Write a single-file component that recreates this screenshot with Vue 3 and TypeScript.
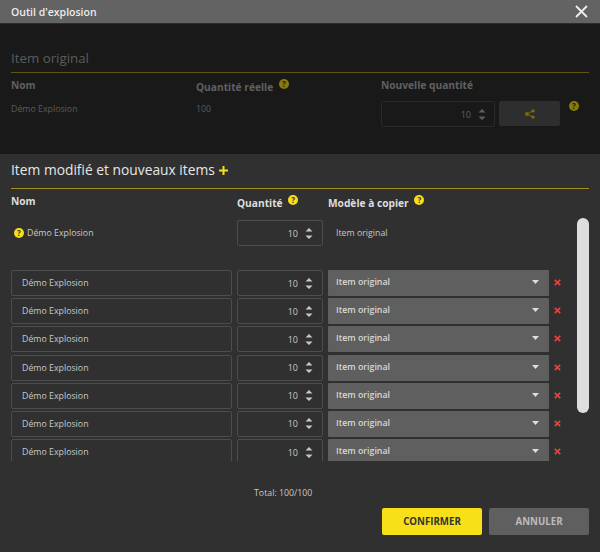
<template>
  <div class="dialog">
    <header class="titlebar">
      <span>Outil d'explosion</span>
      <svg class="close" width="13" height="13" viewBox="0 0 13 13">
        <path d="M1 1l11 11M12 1L1 12" stroke="#eee" stroke-width="1.8" fill="none" />
      </svg>
    </header>

    <section class="original">
      <h2>Item original</h2>
      <div class="orig-grid">
        <div class="col-label">Nom</div>
        <div class="col-label low">Quantité réelle <HelpDot dim class="up" /></div>
        <div class="col-label">Nouvelle quantité</div>
        <div class="value">Démo Explosion</div>
        <div class="value">100</div>
        <div class="new-qty">
          <div class="spin dim">
            <span>10</span>
            <svg class="arrows" width="8" height="13" viewBox="0 0 8 13">
              <path d="M4 1l3.5 3.5h-7zM4 12L.5 8.5h7z" fill="#5f5f5f" />
            </svg>
          </div>
          <button class="share" type="button">
            <svg width="10" height="10" viewBox="0 0 10 10" fill="#7d6a08">
              <circle cx="2" cy="5" r="1.9" />
              <circle cx="8" cy="1.9" r="1.7" />
              <circle cx="8" cy="8.1" r="1.7" />
              <path d="M2 5l6-3.1M2 5l6 3.1" stroke="#7d6a08" stroke-width="1" />
            </svg>
          </button>
          <HelpDot dim class="share-help" />
        </div>
      </div>
    </section>

    <section class="modified">
      <h2>
        Item modifié et nouveaux items
        <svg class="plus" width="9" height="9" viewBox="0 0 9 9">
          <path d="M4.5 0v9M0 4.5h9" stroke="#f7e017" stroke-width="2" />
        </svg>
      </h2>
      <div class="mod-head">
        <div class="col-label">Nom</div>
        <div class="col-label low">Quantité <HelpDot class="up" /></div>
        <div class="col-label low">Modèle à copier <HelpDot class="up" /></div>
      </div>

      <div class="list-wrap">
        <div class="list">
          <div class="row first">
            <div class="plain"><HelpDot class="lead" />Démo Explosion</div>
            <div class="spin">
              <span>10</span>
              <svg class="arrows" width="8" height="13" viewBox="0 0 8 13">
                <path d="M4 1l3.5 3.5h-7zM4 12L.5 8.5h7z" fill="#c8c8c8" />
              </svg>
            </div>
            <div class="plain model">Item original</div>
          </div>

          <div v-for="row in rows" :key="row" class="row">
            <div class="name">Démo Explosion</div>
            <div class="spin">
              <span>10</span>
              <svg class="arrows" width="8" height="13" viewBox="0 0 8 13">
                <path d="M4 1l3.5 3.5h-7zM4 12L.5 8.5h7z" fill="#c8c8c8" />
              </svg>
            </div>
            <div class="select">
              <span>Item original</span>
              <svg width="7" height="4" viewBox="0 0 7 4"><path d="M0 0h7L3.5 4z" fill="#ddd" /></svg>
            </div>
            <svg class="remove" width="7" height="7" viewBox="0 0 7 7">
              <path d="M.8.8l5.4 5.4M6.2.8L.8 6.2" stroke="#e8403c" stroke-width="1.7" />
            </svg>
          </div>
        </div>
        <div class="scrollbar"></div>
      </div>

      <div class="total">Total: 100/100</div>

      <div class="actions">
        <button class="btn confirm" type="button">CONFIRMER</button>
        <button class="btn cancel" type="button">ANNULER</button>
      </div>
    </section>
  </div>
</template>

<script setup lang="ts">
import { defineComponent, h } from 'vue'

const rows = [1, 2, 3, 4, 5, 6, 7]

// small round "?" marker used next to several labels
const HelpDot = defineComponent({
  props: { dim: Boolean },
  setup(props) {
    return () =>
      h('span', { class: 'help', style: { background: props.dim ? '#8a7a08' : '#f7e017', color: props.dim ? '#191919' : '#303030' } }, '?')
  },
})
</script>

<style>
html,
body {
  margin: 0;
  background: #303030;
}
</style>

<style scoped>
.dialog {
  width: 600px;
  height: 552px;
  overflow: hidden;
  display: flex;
  flex-direction: column;
  font-family: "Open Sans", "Noto Sans", sans-serif;
  font-size: 8.8px;
  color: #c8c8c8;
  background: #303030;
}

.titlebar {
  height: 23px;
  flex: none;
  display: flex;
  align-items: center;
  justify-content: space-between;
  padding: 0 12px 0 11px;
  background: #636363;
  border-bottom: 1px solid #2c2c2c;
  color: #ececec;
  font-size: 10.5px;
  font-weight: 600;
}

.original {
  height: 130px;
  flex: none;
  box-sizing: border-box;
  padding: 24px 11px 0;
  background: #191919;
  color: #5c5c5c;
}

h2 {
  margin: 0;
  font-size: 13.3px;
  font-weight: 400;
  line-height: 20px;
}

.original h2 {
  height: 24px;
  border-bottom: 1px solid #63520e;
  color: #5c5c5c;
}

.orig-grid {
  display: grid;
  grid-template-columns: 185px 185px 1fr;
  grid-template-rows: 20px 28px;
  padding-top: 3px;
}

.col-label {
  font-size: 10.2px;
  font-weight: 700;
  line-height: 18px;
  white-space: nowrap;
}

.low {
  position: relative;
  top: 2px;
}

.original .col-label {
  color: #606060;
}

.value {
  line-height: 26px;
  color: #5c5c5c;
}

.new-qty {
  display: flex;
  align-items: flex-start;
  gap: 4px;
  margin-top: 5px;
}

.spin {
  width: 86px;
  height: 26px;
  box-sizing: border-box;
  display: flex;
  align-items: center;
  justify-content: flex-end;
  gap: 7px;
  padding-right: 9px;
  flex: none;
  border: 1px solid #4d4d4d;
  border-radius: 2px;
  font-size: 9px;
  color: #c8c8c8;
}

.spin.dim {
  width: 114px;
  border-color: #2a2a2a;
  color: #5f5f5f;
  padding-right: 8px;
}

.share {
  width: 61px;
  height: 25px;
  padding: 0;
  display: flex;
  align-items: center;
  justify-content: center;
  background: #2e2e2e;
  border: none;
  border-radius: 2px;
}

.share-help {
  margin-left: 5px;
}

.help {
  display: inline-block;
  flex: none;
  width: 10px;
  height: 10px;
  border-radius: 50%;
  font-size: 8px;
  font-weight: 700;
  line-height: 10px;
  text-align: center;
  vertical-align: middle;
}

.up {
  margin-left: 3px;
  position: relative;
  top: -4px;
}

.modified {
  flex: 1;
  padding: 6px 11px 0;
  display: flex;
  flex-direction: column;
}

.modified h2 {
  height: 29px;
  box-sizing: border-box;
  border-bottom: 1px solid #a48f1c;
  color: #e6e6e6;
  font-size: 13.8px;
}

.plus {
  margin-left: 1px;
}

.mod-head {
  display: grid;
  grid-template-columns: 226px 91px 1fr;
  padding-top: 3px;
  height: 22px;
  color: #dedede;
}

.list-wrap {
  display: flex;
  justify-content: space-between;
  height: 247px;
  flex: none;
  overflow: hidden;
}

.list {
  width: 556px;
}

.row {
  display: flex;
  align-items: center;
  height: 26px;
  margin-bottom: 2.2px;
}

.row.first {
  margin: 6px 0 24px;
}

.plain {
  width: 221px;
  margin-right: 5px;
  flex: none;
  display: flex;
  align-items: center;
  padding-left: 3px;
  box-sizing: border-box;
}

.lead {
  margin-right: 3px;
}

.plain.model {
  margin: 0 0 0 5px;
  padding-left: 8px;
}

.name {
  width: 221px;
  height: 26px;
  margin-right: 5px;
  flex: none;
  box-sizing: border-box;
  padding-left: 10px;
  line-height: 24px;
  border: 1px solid #4d4d4d;
  border-radius: 2px;
}

.select {
  width: 221px;
  height: 26px;
  margin-left: 5px;
  flex: none;
  box-sizing: border-box;
  display: flex;
  align-items: center;
  justify-content: space-between;
  padding: 0 10px 2px 8px;
  background: #5f5f5f;
  border-radius: 1px;
  color: #d8d8d8;
  font-weight: 600;
}

.remove {
  margin-left: 5px;
  margin-top: -1px;
}

.scrollbar {
  width: 12px;
  height: 195px;
  margin-top: 4px;
  flex: none;
  background: #dedede;
  border-radius: 6px;
}

.total {
  margin-top: 25px;
  padding-left: 243px;
  line-height: 14px;
  color: #c8c8c8;
}

.actions {
  display: flex;
  justify-content: flex-end;
  gap: 7px;
  margin-top: 8px;
}

.btn {
  height: 27px;
  width: 100px;
  padding: 0;
  border: none;
  border-radius: 2px;
  font-family: inherit;
  font-size: 9.7px;
  font-weight: 700;
}

.confirm {
  background: #f7e017;
  color: #333;
}

.cancel {
  background: #5f5f5f;
  color: #bcbcbc;
}
</style>
